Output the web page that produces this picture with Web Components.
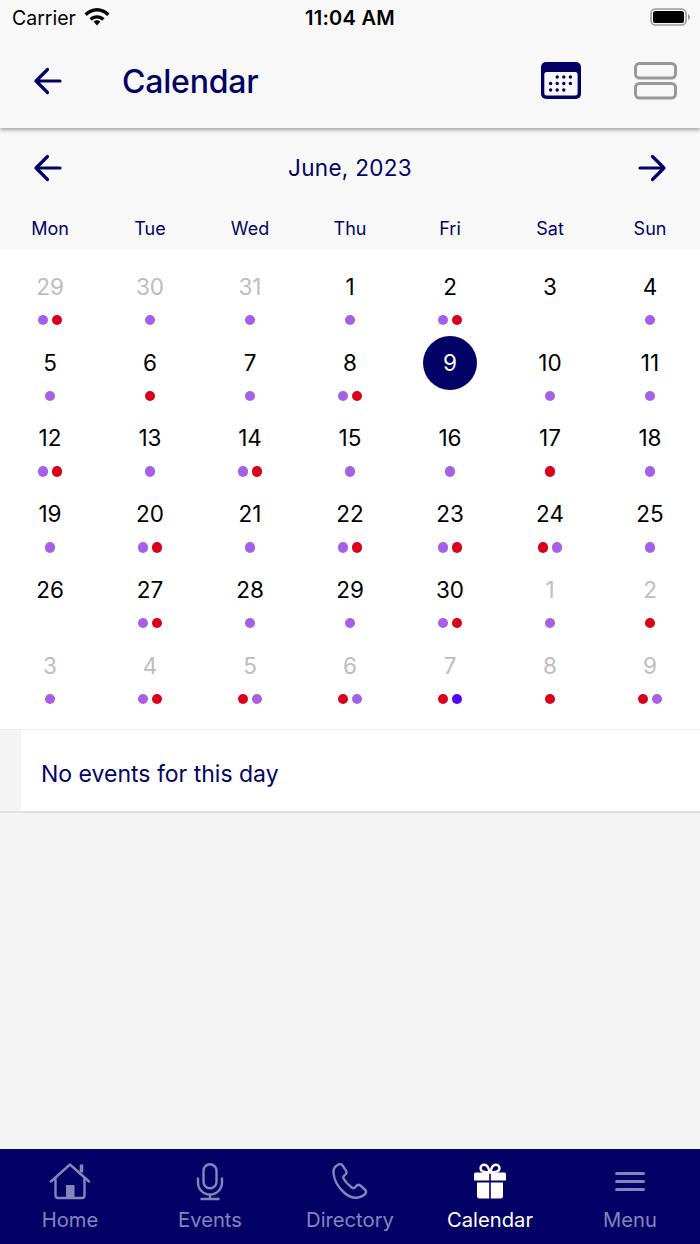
<!DOCTYPE html>
<html><head><meta charset="utf-8">
<style>
html,body{margin:0;padding:0}
body{width:700px;height:1244px;overflow:hidden;background:#f4f4f4;font-family:Inter,"Liberation Sans",sans-serif;color:#020266}
#app{display:flex;flex-direction:column;height:1244px}
</style></head><body>
<div id="app">
<app-header title="Calendar"></app-header>
<cal-month month="June, 2023"></cal-month>
<cal-grid></cal-grid>
<event-row>No events for this day</event-row>
<tab-bar></tab-bar>
</div>
<script>
function el(name,html){customElements.define(name,class extends HTMLElement{connectedCallback(){if(this.shadowRoot)return;const r=this.attachShadow({mode:'open'});r.innerHTML=typeof html==='function'?html(this):html;}});}
const NAVY='#020266';
const arrow=d=>`<svg width="30" height="30" viewBox="0 0 30 30" fill="none" stroke="${NAVY}" stroke-width="3.200" stroke-linecap="round" stroke-linejoin="round">${d==='l'?'<path d="M27 15H3M14.500 3.500L3 15l11.500 11.500"/>':'<path d="M3 15h24M15.500 3.500L27 15 15.500 26.500"/>'}</svg>`;
el('status-bar',`<style>
:host{display:flex;height:36px;align-items:center;padding:0 10px 0 12px;justify-content:space-between;position:relative;color:#000;font:400 19.500px Inter,"Liberation Sans",sans-serif}
.l{display:flex;align-items:center;gap:8px}
.t{position:absolute;left:0;right:0;text-align:center;font-weight:600;font-size:20px;letter-spacing:.3px}
.bat{margin-top:-2px}
</style>
<div class="l"><span>Carrier</span>
<svg width="26" height="20" viewBox="0 1.500 26 20"><path d="M0.500 7C3.900 3.700 8.200 1.600 13 1.600s9.100 2.100 12.500 5.400l-2.400 2.500C20.400 6.800 16.900 5.100 13 5.100S5.600 6.800 2.900 9.500z"/><path d="M5.500 11.800C7.500 9.900 10.100 8.700 13 8.700s5.500 1.200 7.500 3.100l-2.400 2.400c-1.400-1.300-3.100-2.100-5.100-2.100s-3.700.8-5.100 2.100z"/><path d="M13 13.800c1.300 0 2.500.5 3.300 1.400L13 19l-3.300-3.800c.8-.9 2-1.400 3.300-1.400z"/></svg></div>
<div class="t">11:04 AM</div>
<svg class="bat" width="40" height="18" viewBox="0 0 40 18"><rect x="1" y="1" width="35" height="16" rx="4.500" fill="none" stroke="#9a9a9a" stroke-width="1.600"/><rect x="3" y="3" width="31" height="12" rx="2.600" fill="#000"/><path d="M38 6v6c1.200-.5 2-1.700 2-3s-.8-2.500-2-3z" fill="#9a9a9a"/></svg>`);
el('app-header',h=>`<style>
:host{display:block;background:#f8f8f8;height:128px;box-shadow:0 2px 4px rgba(0,0,0,.35);position:relative;z-index:2;box-sizing:border-box}
.row{display:flex;align-items:center;height:82px;padding:0 23px 0 33px;margin-top:4px}
h1{margin:2px 0 0 59px;font:500 32px/1 Inter,"Liberation Sans",sans-serif;color:${NAVY};flex:1;letter-spacing:-.2px}
.b{display:flex;align-items:center;gap:52px}
svg{display:block}
</style><status-bar></status-bar>
<div class="row">${arrow('l')}<h1>${h.getAttribute('title')}</h1>
<div class="b">
<svg width="42" height="38" viewBox="0 0 40 38"><rect x="0" y="0" width="40" height="37" rx="5" fill="${NAVY}"/><rect x="3.300" y="10" width="33.300" height="23.600" rx="2.500" fill="#f8f8f8"/>
<g fill="${NAVY}">${[[1,0],[2,0],[3,0],[0,1],[1,1],[2,1],[3,1],[0,2],[1,2],[2,2]].map(([c,r])=>`<circle cx="${9.6+c*6.6}" cy="${15+r*6.5}" r="1.700"/>`).join('')}</g></svg>
<svg width="43" height="38" viewBox="0 0 43 38" fill="none" stroke="#98989d" stroke-width="3"><rect x="1.500" y="1.500" width="40" height="14.500" rx="4"/><rect x="1.500" y="21.500" width="40" height="14.500" rx="4"/></svg>
</div></div>`);
el('cal-month',h=>`<style>
:host{display:block;background:#f8f8f8;height:121px;box-sizing:border-box}
.top{display:flex;justify-content:space-between;align-items:center;height:80px;padding:0 33px}
.m{font:400 22.500px/1 Inter,"Liberation Sans",sans-serif;color:${NAVY};letter-spacing:.3px}
svg{display:block}
.w{display:grid;grid-template-columns:repeat(7,100px);font:400 18px/1 Inter,"Liberation Sans",sans-serif;color:${NAVY};text-align:center;margin-top:12px}
</style><div class="top">${arrow('l')}<div class="m">${h.getAttribute('month')}</div>${arrow('r')}</div>
<div class="w">${['Mon','Tue','Wed','Thu','Fri','Sat','Sun'].map(d=>`<span>${d}</span>`).join('')}</div>`);
el('cal-day',h=>{const m=h.hasAttribute('muted'),s=h.hasAttribute('selected'),c={p:'#a560e8',r:'#d9001b',b:'#5500ff'};
return `<style>
:host{display:flex;flex-direction:column;align-items:center;padding-top:11px}
.n{width:54px;height:54px;border-radius:50%;display:flex;align-items:center;justify-content:center;font:400 22.500px/1 Inter,"Liberation Sans",sans-serif;color:${m?'#bdbdbd':'#000'}}
.n.s{background:${NAVY};color:#fff}
.d{display:flex;gap:3.200px;height:10.500px;margin-top:.75px}
.d i{width:10.500px;height:10.500px;border-radius:50%}
</style><div class="n ${s?'s':''}">${h.getAttribute('n')}</div><div class="d">${[...(h.getAttribute('dots')||'')].map(x=>`<i style="background:${c[x]}"></i>`).join('')}</div>`});
const days='29m:pr 30m:p 31m:p 1:p 2:pr 3: 4:p 5:p 6:r 7:p 8:pr 9s: 10:p 11:p 12:pr 13:p 14:pr 15:p 16:p 17:r 18:p 19:p 20:pr 21:p 22:pr 23:pr 24:rp 25:p 26: 27:pr 28:p 29:p 30:pr 1m:p 2m:r 3m:p 4m:pr 5m:rp 6m:rp 7m:rb 8m:r 9m:rp'.split(' ');
el('cal-grid',`<style>
:host{display:grid;grid-template-columns:repeat(7,100px);grid-template-rows:repeat(6,75.800px);background:#fff;height:481px;box-sizing:border-box;border-bottom:1px solid #ececec}
cal-day{height:75.800px;overflow:visible}
</style>`+days.map(x=>{const[a,d]=x.split(':');const n=parseInt(a);return `<cal-day n="${n}" dots="${d}" ${a.includes('m')?'muted':''} ${a.includes('s')?'selected':''}></cal-day>`}).join(''));
el('event-row',`<style>
:host{display:block;padding-left:21px;background:#f4f4f4;border-bottom:2px solid #e0e0e0;height:83px;box-sizing:border-box;flex:none}
div{background:#fff;height:81px;display:flex;align-items:center;padding-left:20px;padding-top:7px;box-sizing:border-box;font:400 23px/1 Inter,"Liberation Sans",sans-serif;color:${NAVY}}
</style><div><slot></slot></div>`);
el('tab-item',h=>`<style>
:host{display:flex;flex-direction:column;align-items:center;color:${h.hasAttribute('active')?'#fff':'#8584bb'};font:400 20.200px/1 Inter,"Liberation Sans",sans-serif}
.i{height:38px;margin-bottom:9px;display:flex}
</style><div class="i"><slot></slot></div><span>${h.getAttribute('label')}</span>`);
const I='#8584bb';
el('tab-bar',`<style>
:host{display:grid;grid-template-columns:repeat(5,140px);background:${NAVY};height:95px;margin-top:auto;padding-top:14px;box-sizing:border-box;flex:none}
svg{display:block}
</style>
<tab-item label="Home"><svg width="42" height="38" viewBox="0 0 42 38" fill="none" stroke="${I}" stroke-width="2.400" stroke-linecap="round" stroke-linejoin="round"><path d="M2 18.500L21 1.500l19 17"/><path d="M6.500 15v17.500a2.500 2.500 0 0 0 2.500 2.500h24a2.500 2.500 0 0 0 2.500-2.500V15"/><path d="M32.500 1.500v8" stroke-width="3.500" stroke-linecap="butt"/><rect x="17" y="22" width="8.500" height="13" fill="${I}" stroke="none"/></svg></tab-item>
<tab-item label="Events"><svg width="28" height="38" viewBox="0 0 28 38" fill="none" stroke="${I}" stroke-width="2.400" stroke-linecap="round"><rect x="7.500" y="1.200" width="13" height="24" rx="6.500"/><path d="M2 15.500v4a12 12 0 0 0 24 0v-4M14 31.500v4.500M5.500 36h17"/></svg></tab-item>
<tab-item label="Directory"><svg width="38" height="38" viewBox="0 0 38 38" fill="none" stroke="${I}" stroke-width="2.400" stroke-linejoin="round"><path d="M5.500 2.800C3.500 4 2.300 6.500 2.500 10c.5 6 4.500 14 10.500 19.500 5 4.500 10 5.700 14 5 3-.5 6.500-2.500 7.800-4.500.7-1.300.2-2.400-1-3.500l-4.500-4c-1.200-1-2.500-.9-3.500 0l-2 2c-.8.7-1.800.8-2.700.2-3.500-2.300-6.500-5.500-8.500-9-.5-1-.4-1.900.3-2.700l2-2c.8-.9.8-2.200.1-3.300l-3.300-5c-.9-1.300-2.700-2-4.200-1.200z"/></svg></tab-item>
<tab-item label="Calendar" active><svg width="36" height="38" viewBox="0 0 36 38"><g fill="none" stroke="#fff" stroke-width="2.400"><path d="M17.500 9.500c-.6-4.500-2.500-7.800-5.300-7.800-2.200 0-3.700 1.600-3.700 3.600 0 2.700 2.500 4.200 9 4.200zM18.500 9.500c.6-4.500 2.500-7.800 5.300-7.800 2.200 0 3.700 1.600 3.700 3.600 0 2.700-2.500 4.200-9 4.200z"/></g><path d="M3.500 9.500h13.700V17.500H2V11A1.500 1.500 0 0 1 3.500 9.500zM18.800 9.500h13.700A1.500 1.500 0 0 1 34 11v6.500H18.800zM5 19.500h12.200V35.500H7.500A2.500 2.500 0 0 1 5 33zM18.800 19.500H31V33a2.500 2.500 0 0 1-2.500 2.500h-9.700z" fill="#fff"/></svg></tab-item>
<tab-item label="Menu"><svg width="30" height="38" viewBox="0 0 30 38" stroke="${I}" stroke-width="3" stroke-linecap="round"><path d="M1.500 10.500h27M1.500 18.500h27M1.500 26.500h27"/></svg></tab-item>`);
</script>
</body></html>
